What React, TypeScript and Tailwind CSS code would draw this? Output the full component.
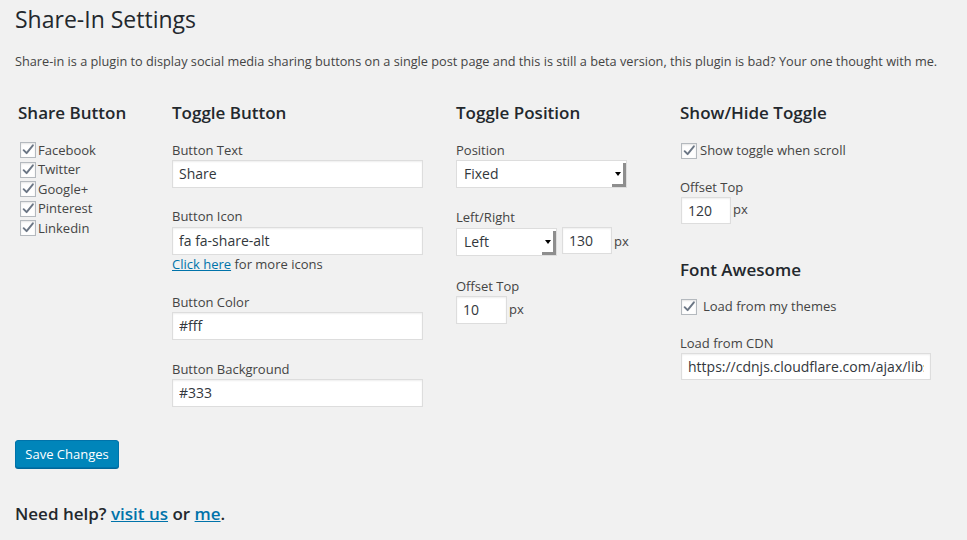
import type { ReactNode } from "react";

const font = { fontFamily: '"Open Sans", "Liberation Sans", sans-serif' };

function Tick() {
  return (
    <svg viewBox="0 0 16 16" className="h-[16px] w-[16px]">
      <path d="M3 8.2 L6.4 11.6 L13.6 2.6" fill="none" stroke="#6b7685" strokeWidth="2.2" strokeLinecap="round" strokeLinejoin="round" />
    </svg>
  );
}

function Box({ className = "" }: { className?: string }) {
  return (
    <span className={`flex h-[16px] w-[16px] items-center justify-center border border-[#b4b9be] bg-[#fefefe] shadow-[inset_0_1px_2px_rgba(0,0,0,0.1)] ${className}`}>
      <Tick />
    </span>
  );
}

function Check({ label }: { label: string }) {
  return (
    <label className="flex h-[19.5px] items-center text-[13px] text-[#444]">
      <Box className="mr-[2px] ml-[2px]" />
      {label}
    </label>
  );
}

function Label({ children }: { children: ReactNode }) {
  return <div className="h-[18px] text-[13px] leading-[18px] text-[#444]">{children}</div>;
}

function TextInput({ value, w, h = "h-[28px]" }: { value: string; w: string; h?: string }) {
  return (
    <input
      readOnly
      value={value}
      className={`${w} ${h} border border-[#ddd] bg-white px-[6px] text-[14px] text-[#32373c] shadow-[inset_0_1px_2px_rgba(0,0,0,0.07)] outline-none`}
      style={font}
    />
  );
}

function Select({ value, w }: { value: string; w: string }) {
  return (
    <div className={`relative ${w} flex h-[28px] items-center border border-[#ddd] bg-white pl-[7px] text-[14px] text-[#32373c]`}>
      {value}
      <span className="absolute right-0 top-[2px] bottom-0 w-[3px] bg-[#8e8e8e]" />
      <span className="absolute right-0 bottom-0 h-[3px] w-[14px] bg-[#8e8e8e]" />
      <span className="absolute right-[5px] top-[11px] h-0 w-0 border-x-[3px] border-t-[4px] border-x-transparent border-t-black" />
    </div>
  );
}

function Heading({ children }: { children: ReactNode }) {
  return <h2 className="h-[24px] text-[17px] font-semibold leading-[24px] text-[#23282d]">{children}</h2>;
}

export default function App() {
  return (
    <div className="min-h-[540px] w-[967px] bg-[#f1f1f1] pl-[15px] text-[#444]" style={font}>
      <h1 className="pt-[5px] text-[23px] font-normal leading-[29px] text-[#23282d]">Share-In Settings</h1>
      <p className="mt-[18px] text-[12.72px] leading-[19.5px]">
        Share-in is a plugin to display social media sharing buttons on a single post page and this is still a beta version, this plugin is bad? Your one thought with me.
      </p>

      <div className="mt-[29px] flex">
        <div className="w-[157px] pl-[3px]">
          <Heading>Share Button</Heading>
          <div className="mt-[16px]">
            {["Facebook", "Twitter", "Google+", "Pinterest", "Linkedin"].map((s) => (
              <Check key={s} label={s} />
            ))}
          </div>
        </div>

        <div className="w-[284px]">
          <Heading>Toggle Button</Heading>
          <div className="mt-[16px]">
            <Label>Button Text</Label>
            <div className="mt-[1px]"><TextInput value="Share" w="w-[251px]" /></div>
            <div className="mt-[19px]"><Label>Button Icon</Label></div>
            <div className="mt-[2px]"><TextInput value="fa fa-share-alt" w="w-[251px]" /></div>
            <div className="h-[18px] text-[13px] leading-[18px]">
              <a className="text-[#0073aa] underline">Click here</a> for more icons
            </div>
            <div className="mt-[20px]"><Label>Button Color</Label></div>
            <div className="mt-[1px]"><TextInput value="#fff" w="w-[251px]" /></div>
            <div className="mt-[20px]"><Label>Button Background</Label></div>
            <div className="mt-[1px]"><TextInput value="#333" w="w-[251px]" /></div>
          </div>
        </div>

        <div className="w-[224px]">
          <Heading>Toggle Position</Heading>
          <div className="mt-[16px]">
            <Label>Position</Label>
            <div className="mt-[1px]"><Select value="Fixed" w="w-[171px]" /></div>
            <div className="mt-[20px]"><Label>Left/Right</Label></div>
            <div className="mt-[2px] flex items-start">
              <Select value="Left" w="w-[101px]" />
              <div className="ml-[5px] -mt-[1px]"><TextInput value="130" w="w-[50px]" h="h-[27px]" /></div>
              <span className="ml-[2px] text-[13px] leading-[26px]">px</span>
            </div>
            <div className="mt-[21px]"><Label>Offset Top</Label></div>
            <div className="mt-[1px] flex items-center">
              <TextInput value="10" w="w-[51px]" />
              <span className="ml-[2px] text-[13px]">px</span>
            </div>
          </div>
        </div>

        <div className="flex-1">
          <Heading>Show/Hide Toggle</Heading>
          <div className="mt-[17px] -ml-[1px]">
            <label className="flex h-[18px] items-center text-[13px]">
              <Box className="mr-[3px] ml-[2px]" />
              Show toggle when scroll
            </label>
          </div>
          <div className="mt-[18px]"><Label>Offset Top</Label></div>
          <div className="mt-[1px] ml-[1px] flex items-center">
            <TextInput value="120" w="w-[50px]" h="h-[27px]" />
            <span className="ml-[2px] text-[13px]">px</span>
          </div>
          <div className="mt-[34px]"><Heading>Font Awesome</Heading></div>
          <div className="mt-[16px]">
            <label className="flex h-[18px] items-center text-[13px]">
              <Box className="mr-[6px] ml-[1px]" />
              Load from my themes
            </label>
          </div>
          <div className="mt-[18px]"><Label>Load from CDN</Label></div>
          <div className="mt-[1px] ml-[1px]">
            <TextInput value="https://cdnjs.cloudflare.com/ajax/libs/font-awesome/4.5.0/css/font-awesome.min.css" w="w-[250px]" h="h-[27px]" />
          </div>
        </div>
      </div>

      <div className="mt-[33px]">
        <button
          className="h-[28px] w-[104px] rounded-[3px] border border-[#0073aa] bg-[#0085ba] text-[13px] leading-[26px] text-white shadow-[0_1px_0_#006799]"
          style={font}
        >
          Save Changes
        </button>
      </div>

      <h2 className="mt-[34px] text-[17px] font-semibold leading-[24px] text-[#23282d]">
        Need help? <a className="text-[#0073aa] underline">visit us</a> or <a className="text-[#0073aa] underline">me</a>.
      </h2>
    </div>
  );
}
